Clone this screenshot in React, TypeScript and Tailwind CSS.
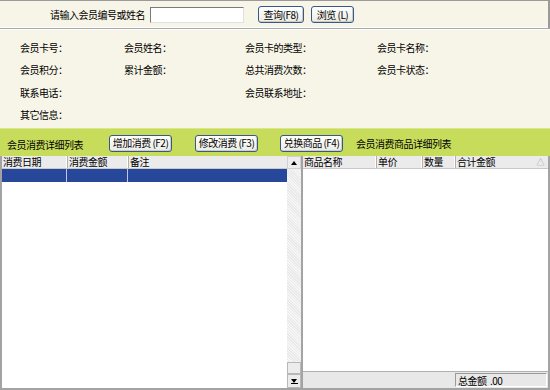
const font = "font-['SimSun','Noto_Sans_CJK_SC',sans-serif]";

function XpButton({ label, w }: { label: string; w: string }) {
  return (
    <button
      type="button"
      className={`${w} flex h-[17px] items-center justify-center whitespace-pre rounded-[3px] border border-[#35598a] bg-gradient-to-b from-white to-[#ecebe4] text-[10px] leading-none tracking-[-0.5px] text-black shadow-[inset_-1px_-1px_0_#cfcdc0]`}
    >
      {label}
    </button>
  );
}

const infoRows: string[][] = [
  ["会员卡号：", "会员姓名：", "会员卡的类型：", "会员卡名称："],
  ["会员积分：", "累计金额：", "总共消费次数：", "会员卡状态："],
  ["联系电话：", "", "会员联系地址：", ""],
  ["其它信息：", "", "", ""],
];

export default function App() {
  return (
    <div className={`flex h-[390px] w-[550px] flex-col overflow-hidden bg-[#f7f5e7] text-[10px] tracking-[-0.5px] text-black ${font}`}>
      {/* search strip */}
      <div className="flex h-[29px] items-center border-t border-r-2 border-b border-t-[#9a9a9a] border-r-[#9a9a9a] border-b-[#a9a9a9] shadow-[inset_0_-1px_0_white]">
        <span className="ml-[50px] w-[100px]">请输入会员编号或姓名</span>
        <div className="h-[16px] w-[94px] border border-t-[#7a7a7a] border-l-[#7a7a7a] border-r-[#e0e0e0] border-b-[#e0e0e0] bg-white" />
        <div className="ml-[14px]">
          <XpButton label="查询(F8)" w="w-[46px]" />
        </div>
        <div className="ml-[7px]">
          <XpButton label="浏览 (L)" w="w-[43px]" />
        </div>
      </div>

      {/* member info */}
      <div className="flex h-[99px] flex-col border-t border-t-white pt-[6px] pl-[20px]">
        {infoRows.map((row, i) => (
          <div key={i} className="grid h-[22.5px] grid-cols-[104px_121px_132px_1fr] items-center">
            {row.map((cell, j) => (
              <span key={j}>{cell}</span>
            ))}
          </div>
        ))}
      </div>

      {/* green toolbar */}
      <div className="flex h-[28px] items-center border-t border-t-[#d8e88a] bg-[#c6dc5a] pt-[1px]">
        <span className="ml-[7px] w-[102px] pt-[3px]">会员消费详细列表</span>
        <XpButton label="增加消费 (F2)" w="w-[63px]" />
        <div className="ml-[23px]">
          <XpButton label="修改消费 (F3)" w="w-[63px]" />
        </div>
        <div className="ml-[22px]">
          <XpButton label="兑换商品 (F4)" w="w-[63px]" />
        </div>
        <span className="ml-[13px]">会员消费商品详细列表</span>
      </div>

      {/* lists */}
      <div className="flex flex-1 border-b-2 border-b-[#a3a3a3]">
        {/* left list */}
        <div className="flex w-[301px] border-l-2 border-l-[#a3a3a3] bg-white">
          <div className="flex flex-1 flex-col">
            <div className="grid h-[13px] grid-cols-[65px_61px_1fr] border-b border-b-[#c8c8c8] bg-[#ebebeb] leading-[12px]">
              <span className="border-r border-r-white pl-[1px] shadow-[1px_0_0_#b0b0b0]">消费日期</span>
              <span className="border-r border-r-white pl-[2px] shadow-[1px_0_0_#b0b0b0]">消费金额</span>
              <span className="pl-[2px]">备注</span>
            </div>
            <div className="grid h-[13px] grid-cols-[65px_61px_1fr] bg-[#27479a]">
              <span className="border-r border-r-[#c0c8e0]" />
              <span className="border-r border-r-[#c0c8e0]" />
              <span />
            </div>
          </div>
          {/* scrollbar */}
          <div className="flex w-[14px] flex-col bg-[#f1f1f1] [background-image:repeating-linear-gradient(45deg,#e9e9e9_0_1px,#f6f6f6_1px_2px)]">
            <div className="flex h-[13px] items-center justify-center border border-[#d0d0d0] bg-[#ededed]">
              <div className="h-0 w-0 border-x-[3px] border-b-[4px] border-x-transparent border-b-black" />
            </div>
            <div className="flex-1" />
            <div className="h-[12px] border border-[#b8b8b8] bg-[#ececec]" />
            <div className="flex h-[14px] flex-col items-center justify-center border border-[#b8b8b8] bg-[#ececec]">
              <div className="h-0 w-0 border-x-[3px] border-t-[4px] border-x-transparent border-t-black" />
              <div className="h-[1px] w-[7px] bg-black" />
            </div>
          </div>
        </div>

        {/* right list */}
        <div className="flex flex-1 flex-col border-l-2 border-r-2 border-l-[#a3a3a3] border-r-[#a3a3a3] bg-white">
          <div className="grid h-[13px] grid-cols-[73px_46px_33px_1fr] border-b border-b-[#c8c8c8] bg-[#ebebeb] leading-[12px]">
            <span className="border-r border-r-white pl-[1px] shadow-[1px_0_0_#b0b0b0]">商品名称</span>
            <span className="border-r border-r-white pl-[2px] shadow-[1px_0_0_#b0b0b0]">单价</span>
            <span className="border-r border-r-white pl-[2px] shadow-[1px_0_0_#b0b0b0]">数量</span>
            <span className="flex justify-between pl-[2px] pr-[4px]">
              合计金额
              <span className="text-[8px] text-[#9a9a9a]">△</span>
            </span>
          </div>
          <div className="flex-1" />
          <div className="flex h-[17px] items-center border-t border-t-[#b0b0b0] bg-[#e8e8e8]">
            <div className="ml-[152px] flex h-[14px] w-[92px] items-center whitespace-pre border border-t-[#9a9a9a] border-l-[#9a9a9a] border-r-white border-b-white pl-[2px]">
              总金额  .00
            </div>
          </div>
        </div>
      </div>
    </div>
  );
}
